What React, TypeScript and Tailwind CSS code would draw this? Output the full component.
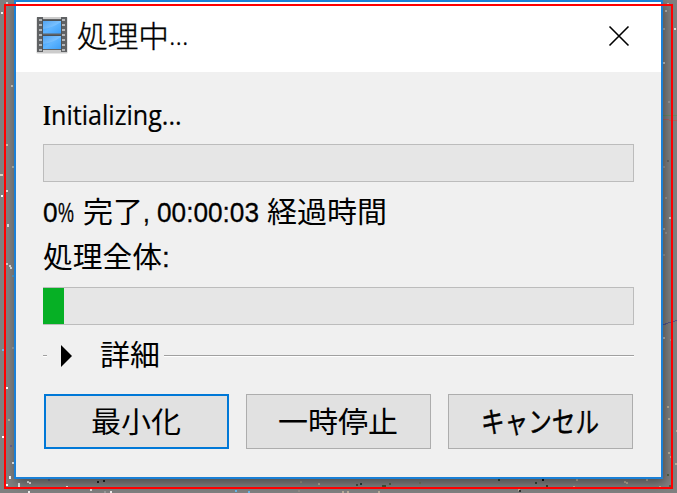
import { useLayoutEffect, useRef, useState } from "react";
import type { ReactNode } from "react";

const JP = "font-['Noto_Sans_CJK_JP',sans-serif]";
const LATIN = "font-['Liberation_Sans','Noto_Sans_CJK_JP',sans-serif] [-webkit-text-stroke:0.3px_black]";

/* A run of text condensed or widened to fill the width of its box. */
function Fit({ box, text, children }: { box: string; text: string; children: ReactNode }) {
  const outer = useRef<HTMLSpanElement>(null);
  const inner = useRef<HTMLSpanElement>(null);
  const [scale, setScale] = useState(1);
  useLayoutEffect(() => {
    if (outer.current && inner.current) {
      setScale(outer.current.offsetWidth / inner.current.offsetWidth);
    }
  }, []);
  return (
    <span ref={outer} className={`block shrink-0 whitespace-pre ${box}`}>
      <span ref={inner} className={`inline-block origin-left ${text}`} style={{ transform: `scaleX(${scale})` }}>
        {children}
      </span>
    </span>
  );
}

function FilmIcon() {
  const holes = [19, 24, 29, 34, 39, 44, 49];
  return (
    <svg width="34" height="40" viewBox="35 15 34 40" className="shrink-0">
      <defs>
        <linearGradient id="sky" x1="0" y1="0" x2="1" y2="1">
          <stop offset="0" stopColor="#3293ee" />
          <stop offset="0.5" stopColor="#60b5ff" />
          <stop offset="1" stopColor="#3d9ff8" />
        </linearGradient>
      </defs>
      <rect x="36.5" y="17" width="31" height="36.5" rx="1" fill="#000" opacity="0.2" />
      <path d="M37 17h6v2h18v-2h6v35h-6v-2H43v2h-6z" fill="#606264" />
      <rect x="43" y="21" width="18" height="12.5" fill="url(#sky)" />
      <rect x="43" y="36" width="18" height="13" fill="url(#sky)" />
      <path d="M43 29q9-1 18-7v-1H43zM43 44q9-1 18-7v-1H43z" fill="#fff" opacity="0.16" />
      <path d="M43 20.5h18M43 35.5h18" stroke="#4b5156" strokeWidth="1" />
      <path d="M42.5 19v31M61.5 19v31" stroke="#4e5357" strokeWidth="1" />
      {holes.map((y) => (
        <g key={y} fill="#b4b6b8">
          <rect x="39" y={y} width="3" height="2" />
          <rect x="62" y={y} width="3" height="2" />
        </g>
      ))}
    </svg>
  );
}

const specks: [number, number, string][] = [
  [1, 12, "#eee"], [6, 2, "#ccc"], [11, 85, "#c8c4bc"], [6, 144, "#c8c0ae"], [12, 166, "#b5b1a4"],
  [0, 174, "#d8d2c0"], [1, 174, "#d8d2c0"], [6, 190, "#ddd"], [1, 195, "#fff"], [7, 224, "#ddd"],
  [7, 225, "#ddd"], [6, 263, "#ccc"], [9, 265, "#ddd"], [10, 267, "#ddd"], [12, 275, "#5997bf"],
  [2, 349, "#6bb8e8"], [12, 347, "#999"], [6, 387, "#fff"], [8, 419, "#b9ad91"], [2, 436, "#fff"],
  [10, 445, "#66668f"], [12, 462, "#eee"], [9, 476, "#fff"], [9, 477, "#fff"], [6, 484, "#fff"],
  [18, 483, "#eee"], [18, 485, "#eee"], [27, 481, "#eee"], [29, 482, "#eee"], [48, 479, "#656580"],
  [66, 486, "#eee"], [97, 481, "#222"], [103, 480, "#222"], [90, 489, "#ddd"], [28, 491, "#eee"],
  [104, 491, "#999"], [110, 491, "#eee"], [235, 490, "#6bb8e8"], [248, 491, "#6bb8e8"],
  [298, 490, "#928c86"], [300, 481, "#9c9788"], [318, 483, "#b5aa96"], [342, 491, "#b9ad98"],
  [347, 491, "#b9ad98"], [356, 484, "#455444"], [360, 483, "#263b36"], [378, 491, "#b9ad98"],
  [382, 485, "#42543a"], [384, 485, "#42543a"], [389, 483, "#516349"], [419, 482, "#777865"],
  [498, 479, "#344634"], [535, 482, "#344634"], [542, 479, "#111"], [546, 485, "#344634"],
  [518, 489, "#b9ad98"], [519, 490, "#333"], [576, 479, "#b9ad98"], [573, 486, "#b9ad98"],
  [624, 481, "#b9ad98"], [626, 482, "#b9ad98"], [646, 479, "#b9ad98"], [659, 486, "#b9ad98"],
  [665, 10, "#bbb"], [667, 3, "#bbb"], [674, 28, "#ddd"], [663, 28, "#aaa"], [663, 62, "#ccc"],
  [668, 101, "#999"], [667, 160, "#666"], [663, 166, "#999"], [665, 197, "#999"], [669, 217, "#ccc"],
  [663, 228, "#aaa"], [665, 232, "#999"], [663, 254, "#999"], [663, 337, "#bbb"], [670, 339, "#999"],
  [667, 406, "#b9ad98"], [668, 418, "#b9ad98"], [676, 430, "#b9ad98"], [668, 452, "#b9ad98"],
  [670, 456, "#b9ad98"], [675, 463, "#b9ad98"], [667, 474, "#516349"], [669, 485, "#516349"],
];

function Backdrop() {
  return (
    <svg width="677" height="493" className="absolute inset-0" shapeRendering="crispEdges">
      {specks.map(([x, y, c]) => (
        <rect key={`${x}-${y}`} x={x} y={y} width="2" height="2" fill={c} />
      ))}
      <path d="M663 325l5-2 5-1 4-2" stroke="#55558b" fill="none" />
      <path d="M663 119l6 1 8 1" stroke="#a66565" fill="none" />
      <path d="M663 115h14" stroke="#698d69" fill="none" />
    </svg>
  );
}

const button = "flex h-[55px] w-[185px] justify-center bg-[#e1e1e1]";

export default function App() {
  return (
    <div className={`relative h-[493px] w-[677px] overflow-hidden bg-[#808080] text-black ${JP}`}>
      <Backdrop />
      <div className="relative ml-[14px] flex h-[479px] w-[649px] flex-col border-2 border-[#1a80d6] bg-[#f0f0f0] shadow-[2px_4px_10px_rgba(0,0,0,0.4)]">
        <header className="flex h-[70px] shrink-0 items-start bg-white pl-[19px]">
          <div className="pt-[13px]">
            <FilmIcon />
          </div>
          <div className="flex pt-[8px] pl-[8px] leading-[48px] [-webkit-text-stroke:0.35px_black]">
            <Fit box="w-[92px]" text="text-[30px] font-light">処理中</Fit>
            <Fit box="w-[19px]" text="text-[30px] font-light font-['Open_Sans']">...</Fit>
          </div>
          <svg width="22" height="22" viewBox="0 0 22 22" className="mt-[23px] mr-[31px] ml-auto">
            <path d="M1.5 1.5l19 19M20.5 1.5l-19 19" stroke="#000" strokeWidth="1.6" />
          </svg>
        </header>

        <main className="flex flex-col pr-[27px] pl-[27px]">
          <div className="flex h-[72px] pt-[21px] text-[28px] leading-[40px]">
            <Fit box="w-[8px]" text="font-['Liberation_Serif'] font-bold text-[30px]">I</Fit>
            <Fit box="w-[131px]" text="font-['Open_Sans'] [-webkit-text-stroke:0.2px_black]">nitializing...</Fit>
          </div>
          <div className="h-[38px] border border-[#bcbcbc] bg-[#e6e6e6]" />

          <div className="flex h-[50px] pt-[6px] text-[28px] leading-[44px]">
            <Fit box="w-[15px]" text={LATIN}>0</Fit>
            <Fit box="w-[16px]" text={LATIN}>%</Fit>
            <Fit box="w-[60px] ml-[9px]" text="text-[29px]">完了</Fit>
            <Fit box="w-[7px]" text={LATIN}>,</Fit>
            <Fit box="w-[102px] ml-[7px]" text={LATIN}>00:00:03</Fit>
            <Fit box="w-[120px] ml-[8px]" text="text-[29px]">経過時間</Fit>
          </div>
          <div className="flex h-[55px] pt-[1px] text-[28px] leading-[44px]">
            <Fit box="w-[119px]" text="text-[29px]">処理全体</Fit>
            <Fit box="w-[8px]" text={LATIN}>:</Fit>
          </div>
          <div className="h-[38px] border border-[#bcbcbc] bg-[#e6e6e6]">
            <div className="-ml-px h-full w-[21px] bg-[#06b025]" />
          </div>

          <div className="flex h-[60px] items-center leading-[46px]">
            <div className="mt-[2px] h-[2px] w-[4px] border-t border-[#a0a0a0] bg-white" />
            <svg width="11" height="22" viewBox="0 0 11 22" className="mt-px ml-[14px]">
              <path d="M0 0l11 11L0 22z" />
            </svg>
            <Fit box="w-[60px] ml-[28px] pt-px" text="text-[29px]">詳細</Fit>
            <div className="mt-[2px] ml-[4px] h-[2px] flex-1 border-t border-[#a0a0a0] bg-white" />
          </div>

          <div className="mt-[9px] ml-px flex gap-[17px]">
            <button className={`${button} border-2 border-[#0078d7] pr-[4px] leading-[49px]`}>
              <Fit box="w-[90px]" text="text-[29px]">最小化</Fit>
            </button>
            <button className={`${button} border border-[#adadad] pr-[4px] leading-[51px]`}>
              <Fit box="w-[120px]" text="text-[29px]">一時停止</Fit>
            </button>
            <button className={`${button} border border-[#adadad] pr-[2px] leading-[51px]`}>
              <Fit box="w-[118px]" text="text-[29px] [-webkit-text-stroke:0.4px_black]">キャンセル</Fit>
            </button>
          </div>
        </main>
      </div>
      <div className="pointer-events-none absolute top-[4px] left-[4px] h-[485px] w-[669px] border-2 border-[#ff0000]" />
    </div>
  );
}
